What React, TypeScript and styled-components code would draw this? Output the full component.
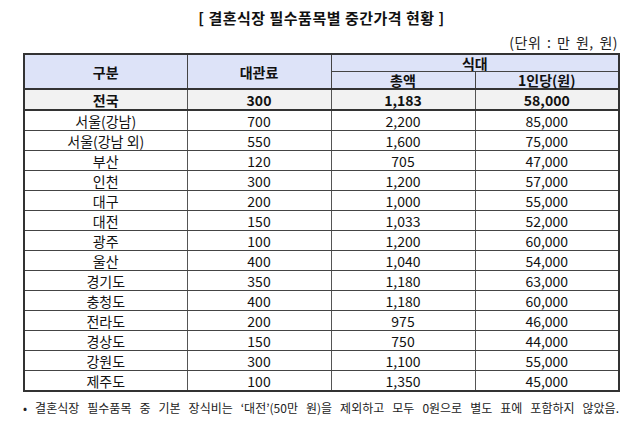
import React from "react";
import styled, { createGlobalStyle } from "styled-components";

const Global = createGlobalStyle`
  html, body { margin: 0; padding: 0; background: #ffffff; }
  body { font-family: "Noto Sans CJK KR", "Noto Sans", sans-serif; color: #111; }
`;

const Page = styled.div`
  width: 640px;
  height: 425px;
  box-sizing: border-box;
  padding: 8px 22px 0 23px;
  display: flex;
  flex-direction: column;
`;

const Title = styled.div`
  text-align: center;
  font-weight: 700;
  font-size: 15px;
  letter-spacing: 0.5px;
  line-height: 20px;
  height: 20px;
  padding-left: 2px;
`;

const Unit = styled.div`
  text-align: right;
  font-size: 14px;
  letter-spacing: 0.5px;
  word-spacing: 2px;
  line-height: 18px;
  margin-top: 5px;
  height: 20px;
  color: #222;
`;

const Table = styled.table`
  border-collapse: collapse;
  width: 595px;
  table-layout: fixed;
  border: 2px solid #333;
`;

const Th = styled.th<{ $bottom?: boolean }>`
  background: #dde3f8;
  font-weight: 700;
  font-size: 14px;
  line-height: 14px;
  height: 16px;
  padding: 0;
  border: 1px solid #444;
  border-bottom: ${(p) => (p.$bottom ? "2px solid #333" : "1px solid #444")};
  text-align: center;
`;

const Row = styled.tr<{ $total?: boolean }>`
  background: ${(p) => (p.$total ? "#f2f2f2" : "#ffffff")};
  td {
    font-weight: ${(p) => (p.$total ? 700 : 400)};
    height: 19px;
    border-bottom: ${(p) => (p.$total ? "2px solid #333" : "1px solid #444")};
  }
`;

const Td = styled.td`
  font-size: 14px;
  line-height: 14px;
  padding: 0;
  text-align: center;
  border-left: 1px solid #555;
  border-right: 1px solid #555;
  color: #111;
`;

const Note = styled.div`
  font-size: 12px;
  line-height: 16px;
  margin-top: 8px;
  color: #222;
  white-space: nowrap;
  text-align: justify;
  text-align-last: justify;
  width: 596px;
`;

const rows: [string, string, string, string][] = [
  ["서울(강남)", "700", "2,200", "85,000"],
  ["서울(강남 외)", "550", "1,600", "75,000"],
  ["부산", "120", "705", "47,000"],
  ["인천", "300", "1,200", "57,000"],
  ["대구", "200", "1,000", "55,000"],
  ["대전", "150", "1,033", "52,000"],
  ["광주", "100", "1,200", "60,000"],
  ["울산", "400", "1,040", "54,000"],
  ["경기도", "350", "1,180", "63,000"],
  ["충청도", "400", "1,180", "60,000"],
  ["전라도", "200", "975", "46,000"],
  ["경상도", "150", "750", "44,000"],
  ["강원도", "300", "1,100", "55,000"],
  ["제주도", "100", "1,350", "45,000"],
];

export default function App() {
  return (
    <Page>
      <Global />
      <Title>[ 결혼식장 필수품목별 중간가격 현황 ]</Title>
      <Unit>(단위 : 만 원, 원)</Unit>
      <Table>
        <colgroup>
          <col style={{ width: 163 }} />
          <col style={{ width: 144 }} />
          <col style={{ width: 144 }} />
          <col style={{ width: 144 }} />
        </colgroup>
        <thead>
          <tr>
            <Th rowSpan={2} $bottom>구분</Th>
            <Th rowSpan={2} $bottom>대관료</Th>
            <Th colSpan={2}>식대</Th>
          </tr>
          <tr>
            <Th $bottom>총액</Th>
            <Th $bottom>1인당(원)</Th>
          </tr>
        </thead>
        <tbody>
          <Row $total>
            <Td>전국</Td>
            <Td>300</Td>
            <Td>1,183</Td>
            <Td>58,000</Td>
          </Row>
          {rows.map((r) => (
            <Row key={r[0]}>
              {r.map((c, i) => (
                <Td key={i}>{c}</Td>
              ))}
            </Row>
          ))}
        </tbody>
      </Table>
      <Note>• 결혼식장 필수품목 중 기본 장식비는 ‘대전’(50만 원)을 제외하고 모두 0원으로 별도 표에 포함하지 않았음.</Note>
    </Page>
  );
}
